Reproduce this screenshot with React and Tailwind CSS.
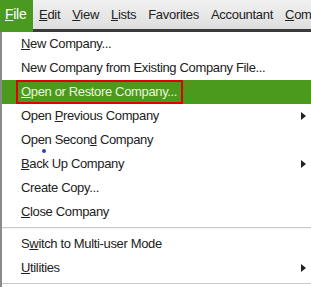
import React from 'react';

const Arrow = () => (
  <svg width="5" height="8" viewBox="0 0 5 8" className="absolute right-[5px] top-1/2 -translate-y-1/2">
    <path d="M0 0 L5 4 L0 8 Z" fill="#222" />
  </svg>
);

function Item({ children, arrow, active }) {
  return (
    <div className={`relative h-6 flex items-center pl-[19px] ${active ? 'bg-[#4c9a1c] text-[#e9f5df]' : 'text-[#222]'}`}>
      {active ? (
        <div className="h-6 -ml-[5px] pl-[3px] pr-[4px] border-2 border-[#e00000] flex items-center">{children}</div>
      ) : (
        children
      )}
      {arrow && <Arrow />}
    </div>
  );
}

export default function App() {
  const menus = ['Edit', 'View', 'Lists', 'Favorites', 'Accountant', 'Com'];
  const keys = ['E', 'V', 'L', '', '', 'C'];

  return (
    <div className="w-[311px] h-[287px] overflow-hidden bg-white text-[13px] tracking-[-0.35px]" style={{ fontFamily: '"Liberation Sans", Arial, sans-serif' }}>
      {/* menu bar */}
      <div className="h-[29px] flex items-center bg-gradient-to-b from-[#f1f1f1] to-[#dedede] text-[#222] text-[13px] tracking-[-0.3px] whitespace-nowrap">
        <div className="h-full w-[33px] shrink-0 bg-[#4a9a22] text-white flex items-center pl-[5px] text-[14px]">
          <span><u>F</u>ile</span>
        </div>
        {menus.map((m, i) => (
          <span key={m} className="ml-[6px] mr-[6px]">
            {keys[i] ? (<><u>{m[0]}</u>{m.slice(1)}</>) : m}
          </span>
        ))}
      </div>
      <div className="flex h-[3px]">
        <div className="w-[33px] bg-[#4a9a22]" />
        <div className="flex-1 bg-[#3a3a3a]" />
      </div>

      {/* dropdown */}
      <div className="relative border-l-2 border-[#8a8a8a] h-[255px]">
        <Item><span><u>N</u>ew Company...</span></Item>
        <Item><span>New Company from Existing Company File...</span></Item>
        <Item active><span><u>O</u>pen or Restore Company...</span></Item>
        <Item arrow><span>Open <u>P</u>revious Company</span></Item>
        <Item><span>Open Secon<u>d</u> Company</span></Item>
        <Item arrow><span><u>B</u>ack Up Company</span></Item>
        <Item><span>Create Copy...</span></Item>
        <Item><span><u>C</u>lose Company</span></Item>
        <div className="h-[8px] flex items-center">
          <div className="w-full border-t border-[#c8c8c8] border-b border-b-[#f4f4f4]" />
        </div>
        <Item><span>S<u>w</u>itch to Multi-user Mode</span></Item>
        <Item arrow><span><u>U</u>tilities</span></Item>
        <div className="border-t border-[#c8c8c8] mt-[3px]" />
        <div className="absolute left-[40px] top-[117px] w-[4px] h-[4px] rounded-full bg-[#2a3fd6]" />
      </div>
    </div>
  );
}
